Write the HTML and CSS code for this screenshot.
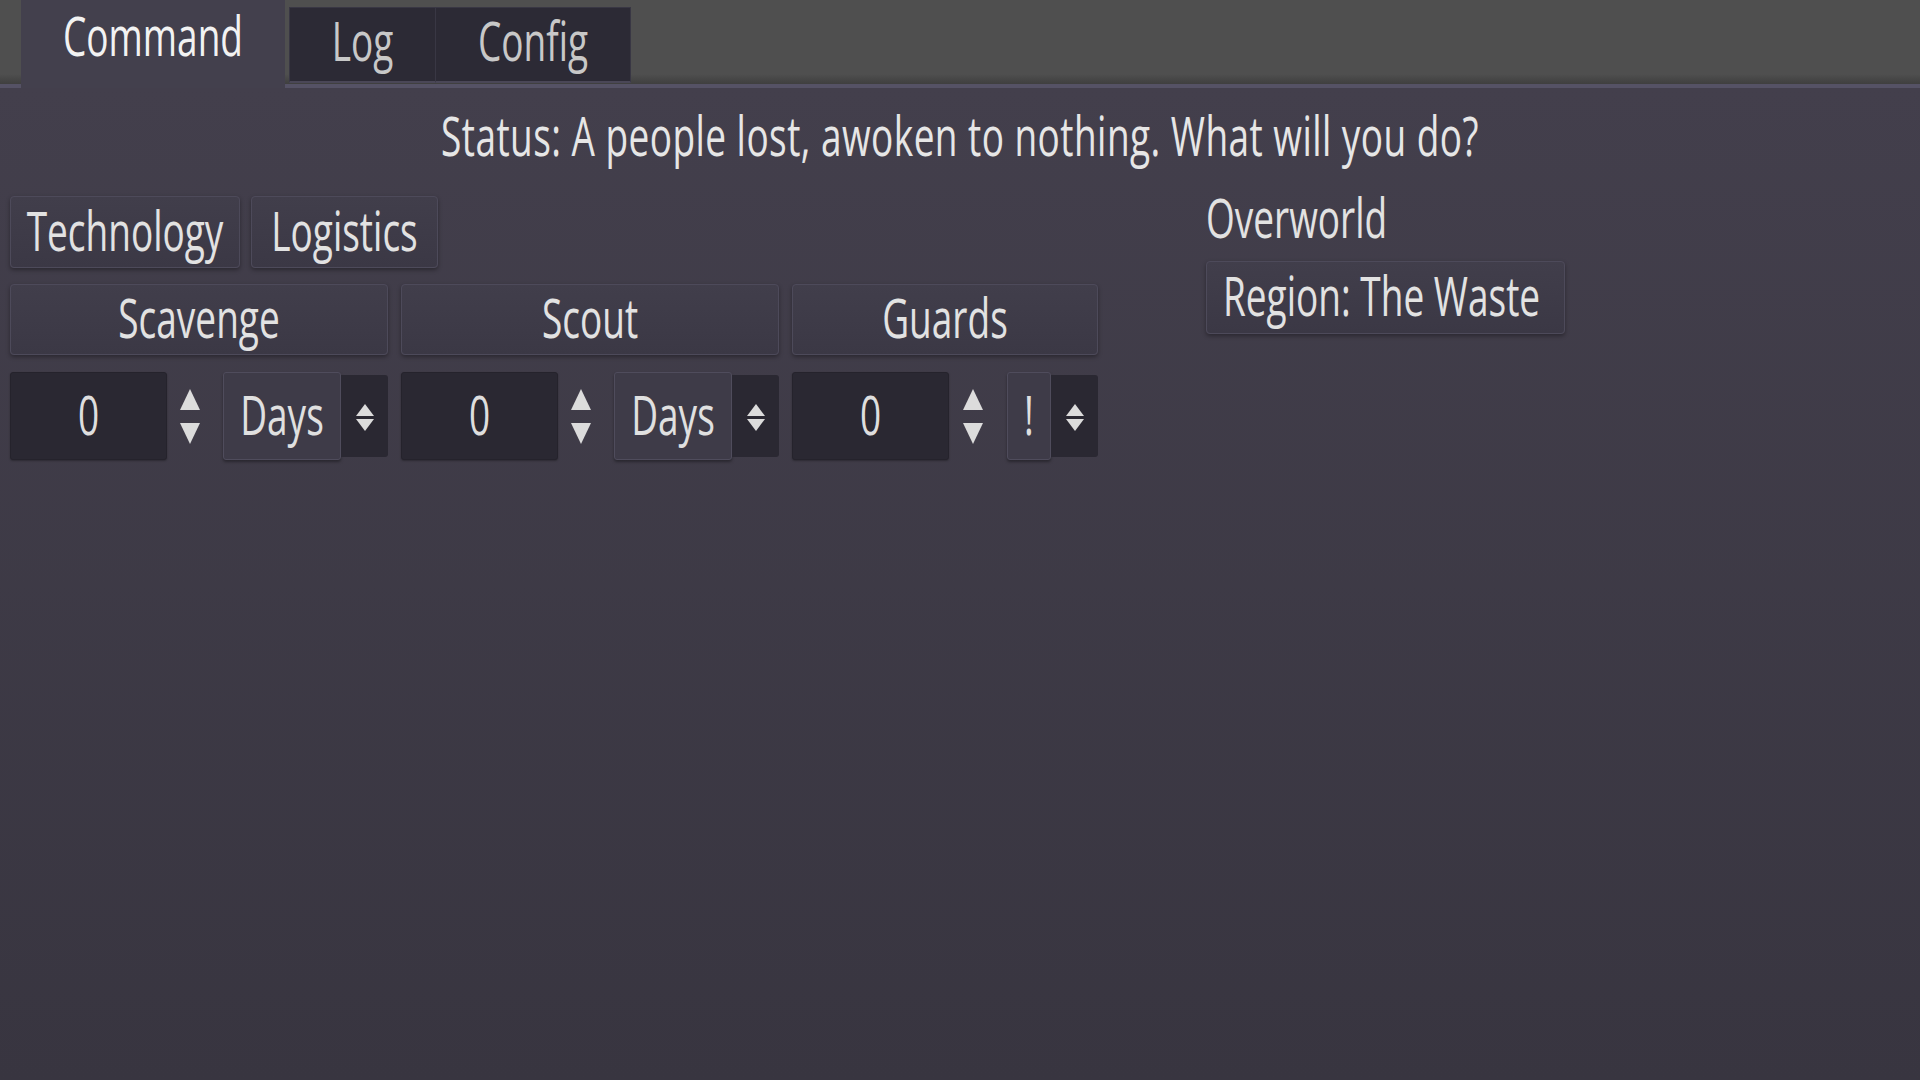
FILE: index.html
```html
<!DOCTYPE html>
<html lang="en">
<head>
<meta charset="utf-8">
<title>Command</title>
<link rel="stylesheet" href="styles.css">
</head>
<body>
<div class="tabbar">
  <div class="tab active"><span class="t">Command</span></div>
  <div class="tab tab-log"><span class="t">Log</span></div>
  <div class="tab tab-config"><span class="t">Config</span></div>
</div>
<main class="panel">
  <div class="status"><span class="t">Status: A people lost, awoken to nothing. What will you do?</span></div>
  <div class="content">
    <section class="left">
      <div class="toprow">
        <div class="btn btn-tech"><span class="t">Technology</span></div>
        <div class="btn btn-logi"><span class="t">Logistics</span></div>
      </div>
      <div class="grid3">
        <div class="btn"><span class="t">Scavenge</span></div>
        <div class="btn"><span class="t">Scout</span></div>
        <div class="btn"><span class="t">Guards</span></div>

        <div class="ctrl">
          <div class="spin">
            <div class="field"><span class="t">0</span></div>
            <div class="arrows"><svg width="22" height="55" viewBox="0 0 22 55"><polygon points="11,0 21,21 1,21"/><polygon points="1,34 21,34 11,55"/></svg></div>
          </div>
          <div class="option opt-days">
            <div class="opt-box"><span class="t">Days</span></div>
            <div class="opt-arrow"><svg width="20" height="28" viewBox="0 0 20 28"><polygon points="10,0 19,12 1,12"/><polygon points="1,15 19,15 10,27"/></svg></div>
          </div>
        </div>

        <div class="ctrl">
          <div class="spin">
            <div class="field"><span class="t">0</span></div>
            <div class="arrows"><svg width="22" height="55" viewBox="0 0 22 55"><polygon points="11,0 21,21 1,21"/><polygon points="1,34 21,34 11,55"/></svg></div>
          </div>
          <div class="option opt-days">
            <div class="opt-box"><span class="t">Days</span></div>
            <div class="opt-arrow"><svg width="20" height="28" viewBox="0 0 20 28"><polygon points="10,0 19,12 1,12"/><polygon points="1,15 19,15 10,27"/></svg></div>
          </div>
        </div>

        <div class="ctrl">
          <div class="spin">
            <div class="field"><span class="t">0</span></div>
            <div class="arrows"><svg width="22" height="55" viewBox="0 0 22 55"><polygon points="11,0 21,21 1,21"/><polygon points="1,34 21,34 11,55"/></svg></div>
          </div>
          <div class="option opt-bang">
            <div class="opt-box"><span class="t">!</span></div>
            <div class="opt-arrow"><svg width="20" height="28" viewBox="0 0 20 28"><polygon points="10,0 19,12 1,12"/><polygon points="1,15 19,15 10,27"/></svg></div>
          </div>
        </div>
      </div>
    </section>
    <section class="right">
      <div class="label"><span class="t">Overworld</span></div>
      <div class="btn region"><span class="t">Region: The Waste</span></div>
    </section>
  </div>
</main>
</body>
</html>
```
FILE: styles.css
```css
* { box-sizing: border-box; }
html, body { margin: 0; height: 100%; }
body {
  font-family: "Open Sans", "Noto Sans", sans-serif;
  font-size: 37px;
  color: #e0e0e0;
  background: #3d3a46;
  overflow: hidden;
}
.t {
  display: inline-block;
  line-height: 37px;
  white-space: nowrap;
  transform: translateY(-3px) scaleY(1.46);
}

/* tab bar */
.tabbar {
  position: relative;
  z-index: 1;
  display: flex;
  align-items: flex-start;
  height: 84px;
  padding-left: 21px;
  background: linear-gradient(#4f4f4f 0, #4f4f4f 74px, #3f3f3f 84px);
}
.tab {
  height: 76px;
  margin-top: 7px;
  display: flex;
  justify-content: center;
  padding-top: 20px;
  background: #2c2a35;
  border: 1px solid #393744;
  border-bottom: 2px solid #4a4757;
  color: #c8c8c8;
}
.tab.active {
  width: 264px;
  height: 88px;
  margin-top: 0;
  margin-right: 4px;
  padding-top: 25px;
  background: #43404d;
  border: none;
  color: #f2f2f2;
}
.tab-log { width: 147px; }
.tab-config { width: 195px; border-left: none; }

/* panel */
.panel {
  height: calc(100% - 84px);
  border-top: 4px solid #555265;
  background: linear-gradient(#433f4c, #383540);
  padding: 24px 10px 0 10px;
}
.status {
  height: 50px;
  display: flex;
  align-items: center;
  justify-content: center;
  color: #e6e6e6;
}
.status .t { letter-spacing: 0.45px; }
.content {
  margin-top: 34px;
  display: grid;
  grid-template-columns: 1088px 1fr;
  column-gap: 108px;
  align-items: start;
}

/* buttons */
.btn {
  display: flex;
  align-items: center;
  justify-content: center;
  background: linear-gradient(#413e4b, #3b3845);
  border: 1px solid #4d4a5a;
  border-radius: 4px;
  box-shadow: 0 2px 4px rgba(0, 0, 0, 0.35);
  color: #e2e2e2;
}
.toprow { display: flex; gap: 11px; height: 72px; }
.btn-tech { width: 230px; }
.btn-logi { width: 187px; }

.grid3 {
  margin-top: 16px;
  display: grid;
  grid-template-columns: 378px 378px 306px;
  grid-template-rows: 71px 88px;
  column-gap: 13px;
  row-gap: 17px;
}

/* spin + option */
.ctrl { display: flex; gap: 10px; }
.spin { flex: 1; display: flex; }
.field {
  width: 157px;
  display: flex;
  align-items: center;
  justify-content: center;
  background: #2a2832;
  border: 1px solid #25232c;
  border-radius: 3px;
  box-shadow: 0 1px 2px rgba(0, 0, 0, 0.3);
  color: #dedede;
}
.arrows {
  flex: 1;
  display: flex;
  align-items: center;
  justify-content: center;
}
.arrows svg, .opt-arrow svg { fill: #dcdcdc; }
.option { display: flex; }
.opt-days { width: 165px; }
.opt-bang { width: 91px; }
.opt-box {
  flex: 1;
  display: flex;
  align-items: center;
  justify-content: center;
  background: #3e3b48;
  border: 1px solid #4f4c5c;
  border-radius: 3px;
  box-shadow: 0 2px 3px rgba(0, 0, 0, 0.35);
  color: #e0e0e0;
}
.opt-arrow {
  width: 47px;
  margin: 3px 0;
  display: flex;
  align-items: center;
  justify-content: center;
  padding-top: 4px;
  background: #2a2832;
  border-radius: 0 3px 3px 0;
}

/* right column */
.right { display: flex; flex-direction: column; align-items: flex-start; }
.label { height: 46px; display: flex; align-items: center; color: #e2e2e2; }
.region {
  width: 359px;
  height: 73px;
  margin-top: 19px;
  justify-content: flex-start;
  padding-left: 16px;
}
```
